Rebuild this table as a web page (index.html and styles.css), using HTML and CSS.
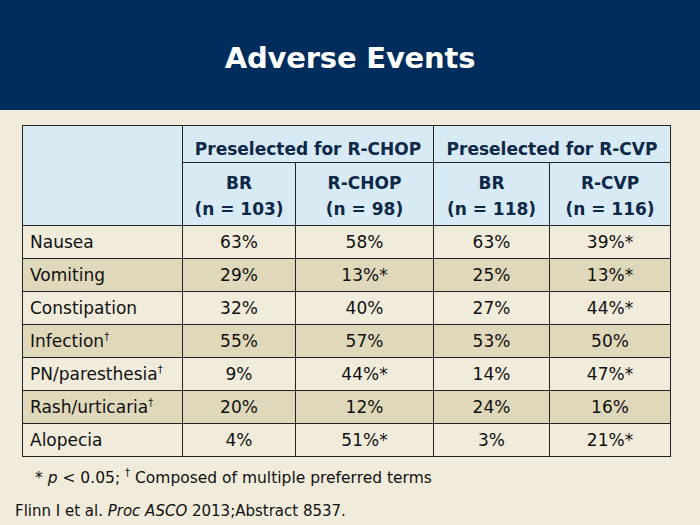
FILE: index.html
```html
<!DOCTYPE html>
<html>
<head>
<meta charset="utf-8">
<link rel="stylesheet" href="styles.css">
</head>
<body>
<header class="banner"><h1 class="title">Adverse Events</h1></header>
<main class="content">
<table class="ae">
  <colgroup>
    <col class="c0"><col class="c1"><col class="c2"><col class="c3"><col class="c4">
  </colgroup>
  <thead>
    <tr class="h1">
      <th rowspan="2" class="blank"></th>
      <th colspan="2">Preselected for R-CHOP</th>
      <th colspan="2">Preselected for R-CVP</th>
    </tr>
    <tr class="h2">
      <th>BR<br>(n = 103)</th>
      <th>R-CHOP<br>(n = 98)</th>
      <th>BR<br>(n = 118)</th>
      <th>R-CVP<br>(n = 116)</th>
    </tr>
  </thead>
  <tbody>
    <tr><td>Nausea</td><td>63%</td><td>58%</td><td>63%</td><td>39%*</td></tr>
    <tr class="alt"><td>Vomiting</td><td>29%</td><td>13%*</td><td>25%</td><td>13%*</td></tr>
    <tr><td>Constipation</td><td>32%</td><td>40%</td><td>27%</td><td>44%*</td></tr>
    <tr class="alt"><td>Infection<sup class="dag">†</sup></td><td>55%</td><td>57%</td><td>53%</td><td>50%</td></tr>
    <tr><td>PN/paresthesia<sup class="dag">†</sup></td><td>9%</td><td>44%*</td><td>14%</td><td>47%*</td></tr>
    <tr class="alt"><td>Rash/urticaria<sup class="dag">†</sup></td><td>20%</td><td>12%</td><td>24%</td><td>16%</td></tr>
    <tr><td>Alopecia</td><td>4%</td><td>51%*</td><td>3%</td><td>21%*</td></tr>
  </tbody>
</table>
<p class="footnote">* <i>p</i> &lt; 0.05; <sup class="dag">†</sup> Composed of multiple preferred terms</p>
<p class="cite">Flinn I et al. <i>Proc ASCO</i> 2013;Abstract 8537.</p>
</main>
</body>
</html>
```
FILE: styles.css
```css
html, body {
  margin: 0;
  padding: 0;
}
body {
  width: 700px;
  height: 525px;
  background: #f0ebdb;
  font-family: "DejaVu Sans", Verdana, sans-serif;
  color: #111;
  overflow: hidden;
}
.banner {
  height: 110px;
  background: #002d5c;
  display: flex;
  align-items: center;
  justify-content: center;
}
.title {
  margin: 0;
  padding-top: 6px;
  color: #fff;
  font-size: 29px;
  font-weight: bold;
  letter-spacing: -0.2px;
}
.content {
  padding: 15px 0 0 22px;
}
.ae {
  border-collapse: collapse;
  table-layout: fixed;
  width: 648px;
  font-size: 17px;
}
.c0 { width: 160px; }
.c1 { width: 113px; }
.c2 { width: 138px; }
.c3 { width: 116px; }
.c4 { width: 121px; }
.ae th, .ae td {
  border: 1.5px solid #222;
  padding: 0;
}
.ae th {
  background: #d8eaf3;
  color: #0e2848;
  font-weight: bold;
  text-align: center;
}
.h1 th {
  height: 37px;
  vertical-align: bottom;
  padding-bottom: 3px;
  box-sizing: border-box;
}
.h2 th {
  height: 59px;
  line-height: 26px;
  vertical-align: middle;
  padding-top: 3px;
}
.ae td {
  height: 32px;
  text-align: center;
  vertical-align: middle;
  background: #f0ebdb;
}
.ae td:first-child {
  text-align: left;
  padding-left: 7px;
}
.ae tr.alt td {
  background: #e0d8bb;
}
.dag {
  font-size: 10px;
  vertical-align: 7px;
  line-height: 0;
  font-weight: normal;
}
.footnote {
  margin: 12px 0 0 13px;
  font-size: 15.5px;
}
.cite {
  margin: 15px 0 0 -7px;
  font-size: 15px;
}
```
